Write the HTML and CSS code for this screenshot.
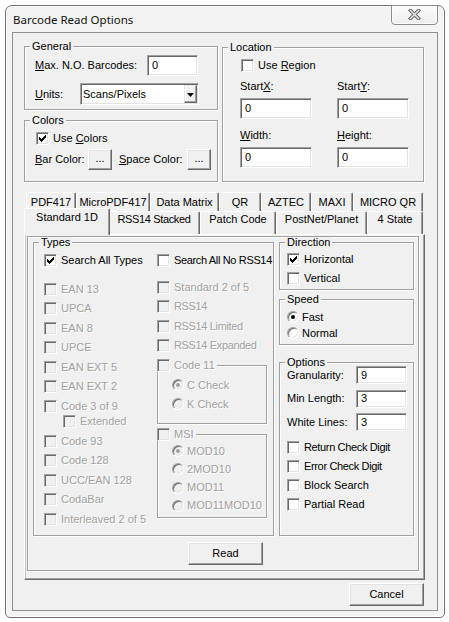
FILE: index.html
```html
<!DOCTYPE html>
<html>
<head>
<meta charset="utf-8">
<title>Barcode Read Options</title>
<link rel="stylesheet" href="styles.css">
</head>
<body>
<div class="window">
  <div class="titlebar">
    <span class="title">Barcode Read Options</span>
    <span class="close">
      <svg width="13" height="11" viewBox="0 0 13 11">
        <path d="M2.5 1.5 L10.5 9.5 M10.5 1.5 L2.5 9.5" stroke="#6a6a6a" stroke-width="3.6" stroke-linecap="square" fill="none"/>
        <path d="M2.5 1.5 L10.5 9.5 M10.5 1.5 L2.5 9.5" stroke="#ececec" stroke-width="1.4" stroke-linecap="square" fill="none"/>
      </svg>
    </span>
  </div>

  <div class="client">
    <div class="top">
      <div class="leftcol">
        <fieldset class="gb general">
          <legend>General</legend>
          <div class="in">
            <div class="row">
              <span class="lbl-max"><u>M</u>ax. N.O. Barcodes:</span>
              <span class="edit e-max">0</span>
            </div>
            <div class="row units">
              <span class="lbl-units"><u>U</u>nits:</span>
              <span class="combo">
                <span>Scans/Pixels</span>
                <span class="dropbtn"><svg width="7" height="4" viewBox="0 0 7 4"><polygon points="0,0 7,0 3.5,4" fill="#000"/></svg></span>
              </span>
            </div>
          </div>
        </fieldset>

        <fieldset class="gb colors">
          <legend>Colors</legend>
          <div class="in">
            <div class="cbrow usecolors">
              <span class="cb"><svg class="chk" width="7" height="7" viewBox="0 0 7 7" shape-rendering="crispEdges"><path d="M6 0h1v1h-1zM5 1h2v1h-2zM0 2h1v1h-1zM4 2h3v1h-3zM0 3h2v1h-2zM3 3h3v1h-3zM0 4h5v1h-5zM1 5h3v1h-3zM2 6h1v1h-1z"/></svg></span>
              <span>Use <u>C</u>olors</span>
            </div>
            <div class="row colorrow">
              <span class="lbl-bar"><u>B</u>ar Color:</span>
              <span class="btn dots">...</span>
              <span class="lbl-space"><u>S</u>pace Color:</span>
              <span class="btn dots">...</span>
            </div>
          </div>
        </fieldset>
      </div>

      <fieldset class="gb location">
        <legend>Location</legend>
        <div class="in">
          <div class="cbrow useregion">
            <span class="cb"></span>
            <span>Use <u>R</u>egion</span>
          </div>
          <div class="locgrid">
            <div class="field"><span>Start<u>X</u>:</span><span class="edit e-loc">0</span></div>
            <div class="field"><span>Start<u>Y</u>:</span><span class="edit e-loc">0</span></div>
            <div class="field"><span><u>W</u>idth:</span><span class="edit e-loc">0</span></div>
            <div class="field"><span><u>H</u>eight:</span><span class="edit e-loc">0</span></div>
          </div>
        </div>
      </fieldset>
    </div>

    <div class="tabs">
      <div class="tabrow row1">
        <span class="tab" style="width:50px">PDF417</span>
        <span class="tab" style="width:74px">MicroPDF417</span>
        <span class="tab" style="width:69px">Data Matrix</span>
        <span class="tab" style="width:42px">QR</span>
        <span class="tab" style="width:50px">AZTEC</span>
        <span class="tab" style="width:42px">MAXI</span>
        <span class="tab" style="width:70px">MICRO QR</span>
      </div>
      <div class="tabrow row2">
        <span class="tab sel" style="width:86px">Standard 1D</span>
        <span class="tab tight" style="width:92px">RSS14 Stacked</span>
        <span class="tab" style="width:76px">Patch Code</span>
        <span class="tab" style="width:91px">PostNet/Planet</span>
        <span class="tab" style="width:56px">4 State</span>
      </div>
      <div class="panel">
        <div class="page">
          <div class="pagegrid">
            <fieldset class="gb types">
              <legend>Types</legend>
              <div class="in">
                <div class="cbrow">
                  <span class="cb"><svg class="chk" width="7" height="7" viewBox="0 0 7 7" shape-rendering="crispEdges"><path d="M6 0h1v1h-1zM5 1h2v1h-2zM0 2h1v1h-1zM4 2h3v1h-3zM0 3h2v1h-2zM3 3h3v1h-3zM0 4h5v1h-5zM1 5h3v1h-3zM2 6h1v1h-1z"/></svg></span>
                  <span>Search All Types</span>
                </div>
                <div class="cbrow">
                  <span class="cb"></span>
                  <span class="tight">Search All No RSS14</span>
                </div>

                <div class="list llist">
                  <div class="cbrow dis"><span class="cb"></span><span>EAN 13</span></div>
                  <div class="cbrow dis"><span class="cb"></span><span>UPCA</span></div>
                  <div class="cbrow dis"><span class="cb"></span><span>EAN 8</span></div>
                  <div class="cbrow dis"><span class="cb"></span><span>UPCE</span></div>
                  <div class="cbrow dis"><span class="cb"></span><span>EAN EXT 5</span></div>
                  <div class="cbrow dis"><span class="cb"></span><span>EAN EXT 2</span></div>
                  <div class="group">
                    <div class="cbrow dis"><span class="cb"></span><span>Code 3 of 9</span></div>
                    <div class="cbrow dis sub"><span class="cb"></span><span>Extended</span></div>
                  </div>
                  <div class="cbrow dis"><span class="cb"></span><span>Code 93</span></div>
                  <div class="cbrow dis"><span class="cb"></span><span>Code 128</span></div>
                  <div class="cbrow dis"><span class="cb"></span><span>UCC/EAN 128</span></div>
                  <div class="cbrow dis"><span class="cb"></span><span>CodaBar</span></div>
                  <div class="cbrow dis"><span class="cb"></span><span>Interleaved 2 of 5</span></div>
                </div>

                <div class="list rlist">
                  <div class="cbrow dis"><span class="cb"></span><span>Standard 2 of 5</span></div>
                  <div class="cbrow dis"><span class="cb"></span><span class="tight">RSS14</span></div>
                  <div class="cbrow dis"><span class="cb"></span><span class="tight">RSS14 Limited</span></div>
                  <div class="cbrow dis"><span class="cb"></span><span class="tight">RSS14 Expanded</span></div>
                  <fieldset class="gb sub-gb code11">
                    <legend><span class="cbrow dis"><span class="cb"></span><span>Code 11</span></span></legend>
                    <div class="in">
                      <div class="rbrow dis"><span class="rb"><span class="dot"></span></span><span>C Check</span></div>
                      <div class="rbrow dis"><span class="rb"></span><span>K Check</span></div>
                    </div>
                  </fieldset>
                  <fieldset class="gb sub-gb msi">
                    <legend><span class="cbrow dis"><span class="cb"></span><span>MSI</span></span></legend>
                    <div class="in">
                      <div class="rbrow dis"><span class="rb"><span class="dot"></span></span><span>MOD10</span></div>
                      <div class="rbrow dis"><span class="rb"></span><span>2MOD10</span></div>
                      <div class="rbrow dis"><span class="rb"></span><span>MOD11</span></div>
                      <div class="rbrow dis"><span class="rb"></span><span>MOD11MOD10</span></div>
                    </div>
                  </fieldset>
                </div>
              </div>
            </fieldset>

            <div class="rightcol">
              <fieldset class="gb dir">
                <legend>Direction</legend>
                <div class="in">
                  <div class="cbrow"><span class="cb"><svg class="chk" width="7" height="7" viewBox="0 0 7 7" shape-rendering="crispEdges"><path d="M6 0h1v1h-1zM5 1h2v1h-2zM0 2h1v1h-1zM4 2h3v1h-3zM0 3h2v1h-2zM3 3h3v1h-3zM0 4h5v1h-5zM1 5h3v1h-3zM2 6h1v1h-1z"/></svg></span><span>Horizontal</span></div>
                  <div class="cbrow"><span class="cb"></span><span>Vertical</span></div>
                </div>
              </fieldset>
              <fieldset class="gb speed">
                <legend>Speed</legend>
                <div class="in">
                  <div class="rbrow"><span class="rb"><span class="dot"></span></span><span>Fast</span></div>
                  <div class="rbrow"><span class="rb"></span><span>Normal</span></div>
                </div>
              </fieldset>
              <fieldset class="gb options">
                <legend>Options</legend>
                <div class="in">
                  <div class="optrows">
                    <div class="optrow"><span class="optlbl">Granularity:</span><span class="edit e-opt">9</span></div>
                    <div class="optrow"><span class="optlbl">Min Length:</span><span class="edit e-opt">3</span></div>
                    <div class="optrow"><span class="optlbl">White Lines:</span><span class="edit e-opt">3</span></div>
                  </div>
                  <div class="optchecks">
                    <div class="cbrow"><span class="cb"></span><span class="tight">Return Check Digit</span></div>
                    <div class="cbrow"><span class="cb"></span><span class="tight">Error Check Digit</span></div>
                    <div class="cbrow"><span class="cb"></span><span>Block Search</span></div>
                    <div class="cbrow"><span class="cb"></span><span>Partial Read</span></div>
                  </div>
                </div>
              </fieldset>
            </div>
          </div>
          <div class="readrow"><span class="btn readbtn">Read</span></div>
        </div>
      </div>
    </div>

    <div class="footer"><span class="btn cancelbtn">Cancel</span></div>
  </div>
</div>
</body>
</html>
```

FILE: styles.css
```css
* { box-sizing: border-box; }

body {
  margin: 0;
  background: #ffffff;
  font-family: "Liberation Sans", Arial, sans-serif;
  font-size: 11px;
  line-height: 13px;
  color: #000;
}

u { text-decoration: underline; text-underline-offset: 1px; }

.tight { letter-spacing: -0.35px; }

.window {
  margin: 5px 0 0 5px;
  width: 440px;
  height: 613px;
  border: 1px solid #727272;
  border-radius: 7px 7px 5px 5px;
  background: #f3f3f3;
  box-shadow: inset 0 0 0 1px #fcfcfc;
  display: flex;
  flex-direction: column;
}

.titlebar {
  height: 26px;
  flex: none;
  display: flex;
  justify-content: space-between;
  align-items: flex-start;
  padding-left: 7px;
}

.title {
  font-family: "Noto Sans", "Open Sans", sans-serif;
  font-size: 11.5px;
  line-height: 16px;
  margin-top: 6px;
  color: #111;
}

.close {
  width: 47px;
  height: 20px;
  margin: -1px 6px 0 0;
  border: 1px solid #8c8c8c;
  border-radius: 0 0 4px 4px;
  background: linear-gradient(#fbfbfb, #eeeeee);
  box-shadow: inset 0 0 0 1px #fdfdfd;
  display: flex;
  align-items: center;
  justify-content: center;
  padding-bottom: 2px;
}

.client {
  margin: 0 6px 6px 6px;
  height: 579px;
  border: 1px solid #8f8f8f;
  background: #f0f0f0;
  padding: 6px 0 0 11px;
}

/* group boxes */
.gb {
  margin: 0;
  padding: 0;
  min-width: 0;
  border: 1px solid #a0a0a0;
  box-shadow: inset 1px 1px 0 #fff, 1px 1px 0 #fff;
}
.gb > legend {
  padding: 0 2px;
  margin-left: 5px;
  line-height: 14px;
  background: #f0f0f0;
}

.top {
  display: grid;
  grid-template-columns: 194px 202px;
  column-gap: 4px;
  align-items: start;
}
.leftcol { display: flex; flex-direction: column; gap: 3px; }

.row { display: flex; align-items: center; }

.general { height: 71px; }
.general .in { padding: 2px 0 0 10px; }
.lbl-max { width: 112px; }
.units { margin-top: 7px; }
.lbl-units { width: 45px; }

.edit {
  height: 21px;
  background: #fff;
  border: 1px solid;
  border-color: #a0a0a0 #fff #fff #a0a0a0;
  box-shadow: inset 1px 1px 0 #696969, inset -1px -1px 0 #e3e3e3;
  padding-left: 4px;
  display: flex;
  align-items: center;
}
.e-max { width: 51px; }
.e-loc { width: 72px; }
.e-opt { width: 51px; height: 18px; }

.combo {
  width: 119px;
  height: 22px;
  background: #fff;
  border: 1px solid;
  border-color: #a0a0a0 #fff #fff #a0a0a0;
  box-shadow: inset 1px 1px 0 #696969, inset -1px -1px 0 #e3e3e3;
  padding: 0 1px 0 2px;
  display: flex;
  align-items: center;
  justify-content: space-between;
}
.dropbtn {
  width: 13px;
  height: 18px;
  background: #f0f0f0;
  border: 1px solid;
  border-color: #e3e3e3 #696969 #696969 #e3e3e3;
  box-shadow: inset -1px -1px 0 #a0a0a0, inset 1px 1px 0 #fff;
  display: flex;
  align-items: center;
  justify-content: center;
  padding-top: 1px;
}

.btn {
  background: #f0f0f0;
  border: 1px solid;
  border-color: #fff #696969 #696969 #fff;
  box-shadow: inset -1px -1px 0 #a0a0a0, inset 1px 1px 0 #e3e3e3;
  display: flex;
  align-items: center;
  justify-content: center;
}
.dots { width: 24px; height: 21px; padding-bottom: 2px; }

.colors { height: 69px; }
.colors .in { padding: 5px 0 0 10px; }
.usecolors { margin-left: 1px; }
.colorrow { margin-top: 4px; height: 21px; }
.lbl-bar { width: 53px; }
.lbl-space { width: 68px; margin-left: 7px; }

.location { height: 142px; margin-top: 1px; }
.location .in { padding: 5px 0 0 17px; }
.useregion { margin-left: 1px; }
.locgrid {
  margin-top: 8px;
  display: grid;
  grid-template-columns: 72px 72px;
  column-gap: 25px;
  row-gap: 10px;
}
.field { display: flex; flex-direction: column; gap: 5px; }

/* checkboxes / radios */
.cbrow, .rbrow {
  display: flex;
  align-items: center;
  gap: 4px;
  height: 13px;
  white-space: nowrap;
}
.cb {
  width: 13px;
  height: 13px;
  flex: none;
  background: #fff;
  border: 1px solid;
  border-color: #a0a0a0 #fff #fff #a0a0a0;
  box-shadow: inset 1px 1px 0 #696969, inset -1px -1px 0 #e3e3e3;
  display: flex;
  align-items: center;
  justify-content: center;
}
.chk { display: block; }
.rb {
  width: 12px;
  height: 12px;
  flex: none;
  border-radius: 50%;
  background: #fff;
  border: 1px solid;
  border-color: #a0a0a0 #fff #fff #a0a0a0;
  box-shadow: inset 1px 1px 0 #696969, inset -1px -1px 0 #e3e3e3;
  display: flex;
  align-items: center;
  justify-content: center;
}
.dot { width: 4px; height: 4px; border-radius: 50%; background: #000; }
.rbrow { gap: 3px; }

.dis { color: #a0a0a0; text-shadow: 1px 1px 0 #fff; }
.dis .cb, .dis .rb { background: #f0f0f0; }
.dis .dot { background: #a0a0a0; }

/* tabs */
.tabs { margin-top: 10px; width: 401px; }
.tabrow { display: flex; padding-left: 2px; }
.row1 { height: 19px; }
.row2 { height: 23px; }
.tab {
  flex: none;
  border: 1px solid;
  border-bottom: none;
  border-color: #fff #696969 transparent #fff;
  box-shadow: inset -1px 0 0 #a0a0a0;
  border-radius: 2px 2px 0 0;
  text-align: center;
  white-space: nowrap;
  background: #f0f0f0;
}
.row1 .tab { padding-top: 3px; }
.row2 .tab { padding-top: 1px; }
.row2 .tab.sel {
  margin: -3px -2px -1px -2px;
  padding-top: 2px;
  position: relative;
  z-index: 1;
}

.panel {
  height: 346px;
  border: 1px solid;
  border-color: #fff #696969 #696969 #fff;
  box-shadow: inset -1px -1px 0 #a0a0a0, inset 1px 0 0 #c4c4c4;
  padding: 1px 5px 8px 2px;
}
.page {
  height: 100%;
  border: 1px solid #a0a0a0;
  box-shadow: inset 1px 1px 0 #fff, 1px 1px 0 #fff;
  padding-left: 5px;
}
.pagegrid {
  display: grid;
  grid-template-columns: 241px 135px;
  column-gap: 5px;
  align-items: start;
}
.types > legend,
.dir > legend,
.speed > legend,
.options > legend { line-height: 11px; }

.types { height: 299px; }
.types .in {
  padding: 6px 0 0 10px;
  display: grid;
  grid-template-columns: 113px auto;
  row-gap: 13.5px;
  align-items: start;
}
.list { display: flex; flex-direction: column; }
.llist { gap: 6.6px; margin-top: 2px; }
.rlist { gap: 6.5px; }
.group .sub { margin: 2px 0 0 19px; }

.sub-gb { width: 110px; }
.sub-gb > legend {
  margin-left: -1px;
  padding: 0 2px 0 0;
  line-height: 13px;
}
.code11 { height: 65px; }
.code11 .in { padding: 7px 0 0 14px; display: flex; flex-direction: column; gap: 6px; }
.msi { height: 90px; margin-top: -2px; }
.msi .in { padding: 3.5px 0 0 14px; display: flex; flex-direction: column; gap: 5.3px; }

.rightcol { display: flex; flex-direction: column; }
.dir { height: 53px; }
.dir .in { padding: 4.5px 0 0 7px; display: flex; flex-direction: column; gap: 6.5px; }
.speed { height: 51px; margin-top: 4px; }
.speed .in { padding: 5.5px 0 0 7px; display: flex; flex-direction: column; gap: 3px; }
.options { height: 179px; margin-top: 12px; }
.options .in { padding: 0 0 0 7px; margin-top: -2px; }
.optrows { display: flex; flex-direction: column; gap: 5.5px; }
.optrow { display: flex; align-items: baseline; }
.optlbl { width: 69px; }
.optchecks { margin-top: 9.5px; display: flex; flex-direction: column; gap: 6px; }

.readrow { margin-top: 6px; padding-left: 155px; display: flex; }
.readbtn { width: 75px; height: 23px; }

.footer { margin-top: 3px; padding-right: 13px; display: flex; justify-content: flex-end; }
.cancelbtn { width: 75px; height: 23px; }
```
